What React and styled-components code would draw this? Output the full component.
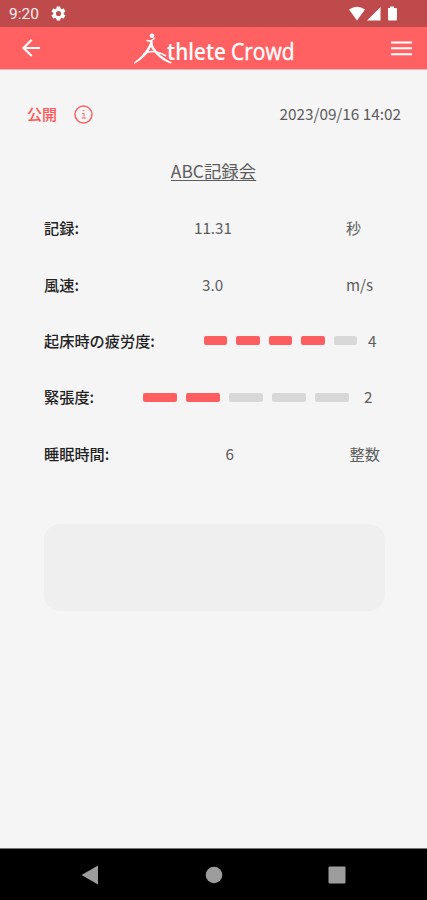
import React from "react";
import styled, { createGlobalStyle } from "styled-components";

const GlobalStyle = createGlobalStyle`
  * { box-sizing: border-box; }
  body { margin: 0; background: #f5f5f5; }
`;

const Screen = styled.div`
  width: 427px;
  height: 900px;
  overflow: hidden;
  display: flex;
  flex-direction: column;
  background: #f5f5f5;
  color: #5c5c5c;
  font-family: "Noto Sans CJK JP", sans-serif;
  font-size: 15.2px;
  font-weight: 400;
`;

const StatusBar = styled.div`
  height: 27px;
  flex: none;
  display: flex;
  align-items: center;
  justify-content: space-between;
  padding: 0 29px 0 9px;
  background: #bf4a4b;
  color: #fff;
`;

const StatusGroup = styled.div`
  display: flex;
  align-items: center;
  gap: ${(p) => p.$gap}px;
`;

const Clock = styled.span`
  font: 400 15.5px/27px Roboto, sans-serif;
  width: 30px;
  padding-top: 2px;
  opacity: 0.92;
`;

const AppBar = styled.header`
  height: 43px;
  flex: none;
  display: flex;
  align-items: center;
  padding: 0 15px 0 22px;
  background: #ff6061;
  border-bottom: 1px solid #efb3b1;
`;

const Icon = styled.svg`
  display: block;
  flex: none;
`;

const LogoMark = styled(Icon)`
  margin-left: 93px;
  margin-right: auto;
  overflow: visible;
`;

const LogoText = styled.text`
  font-family: "Open Sans", "Noto Sans", sans-serif;
  font-size: 23.5px;
  font-weight: ${(p) => p.$weight};
`;

const Content = styled.main`
  flex: 1;
  display: flex;
  flex-direction: column;
`;

const MetaRow = styled.div`
  display: flex;
  align-items: center;
  height: 24px;
  margin-top: 32px;
  padding: 0 26px 0 27px;
`;

const Visibility = styled.span`
  color: #ff5557;
  font-size: 15px;
  font-weight: 500;
  line-height: 20px;
  padding-bottom: 1px;
  margin-right: 17px;
`;

const Timestamp = styled.time`
  margin-left: auto;
  line-height: 20px;
  padding-bottom: 2px;
  font-size: 15.3px;
`;

const EventTitle = styled.a`
  align-self: center;
  margin-top: 31px;
  height: 27px;
  line-height: 27px;
  font-size: 17.4px;
  text-decoration: underline;
  text-decoration-thickness: 1px;
  text-underline-offset: 2px;
`;

const Records = styled.div`
  margin-top: 16px;
  padding-left: 44px;
`;

const Row = styled.div`
  display: grid;
  grid-template-columns: ${(p) => p.$columns};
  align-items: center;
  height: 56.4px;
`;

const Label = styled.span`
  color: #222;
  font-weight: 500;
  line-height: 20px;
  padding-bottom: 2px;
  white-space: nowrap;
`;

const Value = styled.span`
  line-height: 20px;
  padding-bottom: 2px;
  white-space: nowrap;
`;

const Meter = styled.div`
  display: flex;
  gap: 9px;
  width: ${(p) => p.$width}px;
`;

const Segment = styled.span`
  flex: 1;
  height: 9px;
  border-radius: 2px;
  background: ${(p) => (p.$on ? "#ff5e60" : "#d8d8d8")};
`;

const NoteBox = styled.div`
  height: 87px;
  margin: 42.5px 42px 0 44px;
  border-radius: 16px;
  background: #efefef;
`;

const NavBar = styled.nav`
  height: 52px;
  flex: none;
  display: flex;
  align-items: center;
  justify-content: space-between;
  padding: 0 81px;
  background: #000;
  border-top: 1px solid #777;
`;

function Level({ width, value }) {
  return (
    <Meter $width={width}>
      {[1, 2, 3, 4, 5].map((n) => (
        <Segment key={n} $on={n <= value} />
      ))}
    </Meter>
  );
}

const rows = [
  { label: "記録:", columns: "150px 152px 1fr", value: "11.31", unit: "秒" },
  { label: "風速:", columns: "158px 144px 1fr", value: "3.0", unit: "m/s" },
  { label: "起床時の疲労度:", columns: "160px 164px 1fr", level: 4, width: 153 },
  { label: "緊張度:", columns: "99px 221px 1fr", level: 2, width: 206 },
  { label: "睡眠時間:", columns: "181.5px 124px 1fr", value: "6", unit: "整数" },
];

export default function App() {
  return (
    <>
      <GlobalStyle />
      <Screen>
        <StatusBar>
          <StatusGroup $gap={11}>
            <Clock>9:20</Clock>
            <Icon width="17" height="17" viewBox="0 0 24 24" fill="#fff">
              <path d="M19.4 13c.1-.6.1-1.400 0-2l2.100-1.600c.2-.2.3-.5.1-.7l-2-3.400c-.1-.3-.4-.3-.6-.2l-2.500 1a7 7 0 0 0-1.700-1l-.4-2.600c0-.3-.2-.5-.5-.5h-4c-.2 0-.4.2-.5.5L9 5.100a7 7 0 0 0-1.700 1l-2.400-1c-.3-.1-.5 0-.7.2l-2 3.400c-.1.3 0 .5.2.7L4.500 11v2l-2.100 1.600c-.2.2-.3.500-.2.700l2 3.400c.2.3.4.3.7.2l2.400-1c.5.400 1.100.8 1.700 1l.4 2.600c.1.300.3.500.5.500h4c.3 0 .5-.2.500-.5l.4-2.600a7 7 0 0 0 1.700-1l2.500 1c.2.1.5 0 .6-.2l2-3.400c.2-.2.1-.5-.1-.7zM12 15.600a3.600 3.600 0 1 1 0-7.200 3.600 3.600 0 0 1 0 7.200z" />
            </Icon>
          </StatusGroup>
          <Icon width="49" height="16" viewBox="0 0 49 16" fill="#fff">
            <path d="M0 3.600Q8-2.200 16 3.600L8 14.500Z" />
            <path d="M31.500 1v13.500H18Z" />
            <path d="M39 2h2V.5h4V2h2q1 0 1 1v10.500q0 1-1 1h-7q-1 0-1-1Z" />
          </Icon>
        </StatusBar>
        <AppBar>
          <Icon width="18" height="18" viewBox="0 0 18 18" fill="none" stroke="#fff" strokeWidth="2.100">
            <path d="M18 9H2M9.700 .8 1.500 9l8.200 8" />
          </Icon>
          <LogoMark width="164" height="34" viewBox="0 0 164 34" fill="#fff" role="img" aria-label="Athlete Crowd">
            <circle cx="19" cy="4.700" r="2.300" />
            <path d="M13.500 9.500 18 10 22 6.800" fill="none" stroke="#fff" strokeWidth="1.300" strokeLinejoin="round" />
            <path d="M16.800 9.500h2.700L20 14.500C24 22 30 27 39 31.500L37.500 32.500C29 29.500 22 23.500 18 16C14 24 8.500 28.500 1.500 32.800L1 31.500C8 26.500 13.500 20 16.800 12.500Z" />
            <path d="M10 23.500Q19 17 33 25" fill="none" stroke="#fff" strokeWidth="1.500" />
            <LogoText $weight={600} x="34" y="28.500" textLength="59" lengthAdjust="spacingAndGlyphs">thlete</LogoText>
            <LogoText $weight={500} x="98" y="28.500" textLength="63.500" lengthAdjust="spacingAndGlyphs" stroke="#fff" strokeWidth=".45">Crowd</LogoText>
          </LogoMark>
          <Icon width="21" height="15" viewBox="0 0 21 15" fill="#fff">
            <path d="M0 .5h21v2H0ZM0 6.300h21v2H0ZM0 12.200h21v2H0Z" />
          </Icon>
        </AppBar>
        <Content>
          <MetaRow>
            <Visibility>公開</Visibility>
            <Icon width="19" height="19" viewBox="0 0 19 19" fill="none" stroke="#ff6264">
              <circle cx="9.500" cy="9.500" r="8.500" strokeWidth="1.500" />
              <path d="M8.500 5.500h2M8 8.500h2v4.500M7.700 13.200h4" strokeWidth="1.200" opacity=".8" />
            </Icon>
            <Timestamp>2023/09/16 14:02</Timestamp>
          </MetaRow>
          <EventTitle>ABC記録会</EventTitle>
          <Records>
            {rows.map((r) => (
              <Row key={r.label} $columns={r.columns}>
                <Label>{r.label}</Label>
                {r.level ? <Level width={r.width} value={r.level} /> : <Value>{r.value}</Value>}
                <Value>{r.level || r.unit}</Value>
              </Row>
            ))}
          </Records>
          <NoteBox />
        </Content>
        <NavBar>
          <Icon width="18" height="20" viewBox="0 0 18 20" fill="#9d9d9d">
            <path d="M.5 10 17 .5v19Z" />
          </Icon>
          <Icon width="18" height="18" viewBox="0 0 18 18" fill="#9d9d9d">
            <circle cx="9" cy="9" r="8.300" />
          </Icon>
          <Icon width="18" height="18" viewBox="0 0 18 18" fill="#9d9d9d">
            <rect x=".5" y=".5" width="17" height="17" rx="1" />
          </Icon>
        </NavBar>
      </Screen>
    </>
  );
}
